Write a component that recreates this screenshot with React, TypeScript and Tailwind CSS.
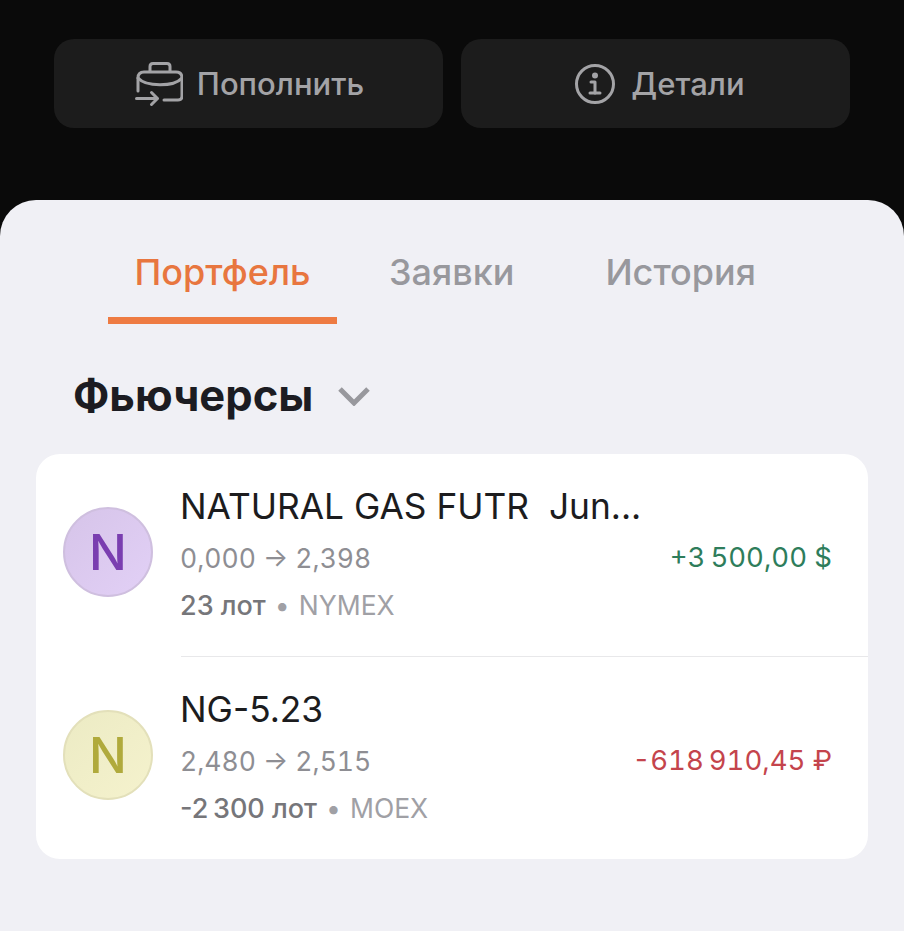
import React from "react";

function WalletIcon() {
  return (
    <svg width="48" height="48" viewBox="0 0 48 48" fill="none" stroke="#a3a3a6" strokeWidth="3" strokeLinecap="round" strokeLinejoin="round" className="shrink-0">
      <path d="M15 11V6.500C15 4.500 16 3.500 18 3.500h14c2 0 3 1 3 3V11" />
      <path d="M3 31V18c0-4 2-6 6-6h32c4 0 6 2 6 6v18c0 3-1.500 4-4 4H29" />
      <path d="M3 18c8 9 36 9 44 0" />
      <path d="M1.500 38.500H22" />
      <path d="M16.500 32.500l6 6-6 6" />
    </svg>
  );
}

function InfoIcon() {
  return (
    <svg width="42" height="42" viewBox="0 0 42 42" fill="none" stroke="#a3a3a6" strokeWidth="3" strokeLinecap="round" strokeLinejoin="round" className="shrink-0">
      <circle cx="21" cy="21" r="18.500" />
      <circle cx="21" cy="12.500" r="1.500" fill="#a3a3a6" />
      <path d="M17 19h4v11" />
      <path d="M16 30h10" />
    </svg>
  );
}

function ActionButton({ icon, label, gap, offset }: { icon: React.ReactNode; label: string; gap: string; offset: string }) {
  return (
    <button className={`flex h-[89px] w-[389px] items-center justify-center rounded-[20px] bg-[#1c1c1c] ${gap} ${offset} text-[31px] font-medium text-[#a3a3a6]`}>
      {icon}
      <span className="pt-[2px]">{label}</span>
    </button>
  );
}

function Position({
  letter, avatar, ink, name, prices, lots, exchange, pnl, pnlColor,
}: {
  letter: string; avatar: string; ink: string; name: string; prices: string; lots: string; exchange: string; pnl: string; pnlColor: string;
}) {
  return (
    <div className="flex h-[202px] items-center pl-[27px] pr-[36px]">
      <div className={`-mt-[6px] flex h-[90px] w-[90px] shrink-0 items-center justify-center rounded-full border-2 bg-linear-to-br text-[50px] font-medium leading-none ${avatar} ${ink}`}>
        {letter}
      </div>
      <div className="ml-[27px] mt-[1px] flex-1">
        <div className="text-[35.300px] leading-[44px] text-[#1c1c1e] whitespace-pre">{name}</div>
        <div className="mt-[9px] text-[26.500px] leading-[40px] tabular-nums text-[#8e8e93]">{prices}</div>
        <div className="mt-[7px] text-[26.500px] leading-[40px] text-[#a0a0a5]">
          <span className="text-[27px] font-medium text-[#76767a]">{lots}</span>
          <span className="mx-[9px]">•</span>
          {exchange}
        </div>
      </div>
      <div className={`mt-[6px] text-[27.500px] tabular-nums ${pnlColor}`}>{pnl}</div>
    </div>
  );
}

export default function App() {
  return (
    <div className="flex h-[931px] w-[904px] flex-col overflow-hidden bg-[#0a0a0a] font-['Inter',sans-serif]">
      <div className="flex h-[200px] shrink-0 justify-center gap-[18px] pt-[39px]">
        <ActionButton icon={<WalletIcon />} label="Пополнить" gap="gap-[14px]" offset="pl-[2px]" />
        <ActionButton icon={<InfoIcon />} label="Детали" gap="gap-[15px]" offset="pl-[8px]" />
      </div>
      <div className="flex-1 rounded-t-[36px] bg-[#f0f0f5] px-[36px]">
        <div className="flex h-[124px] text-[36px] font-medium leading-[44px] text-[#98989d]">
          <div className="ml-[72px] flex h-full w-[229px] justify-center border-b-[7px] border-[#ee7b42] pt-[50px] text-[#e8763f]">Портфель</div>
          <div className="ml-[52px] pt-[50px]">Заявки</div>
          <div className="ml-[91px] pt-[50px]">История</div>
        </div>
        <div className="ml-[37px] mt-[44px] flex h-[56px] items-center gap-[25px]">
          <span className="text-[43.500px] font-bold text-[#1c1c22]">Фьючерсы</span>
          <svg width="32" height="20" viewBox="0 0 32 20" fill="none" stroke="#98989d" strokeWidth="5">
            <path d="M2 3l14 14L30 3" />
          </svg>
        </div>
        <div className="mt-[30px] overflow-hidden rounded-[24px] bg-white">
          <Position letter="N" avatar="from-[#d6c4e9] to-[#e2d0f6] border-[#cfbfdf]" ink="text-[#7a3eb0]" name="NATURAL GAS FUTR  Jun..." prices="0,000 → 2,398" lots="23 лот" exchange="NYMEX" pnl="+3&#8239;500,00 $" pnlColor="text-[#2e7d5b]" />
          <div className="ml-[145px] h-px bg-[#e8e8ea]" />
          <Position letter="N" avatar="from-[#ecebc4] to-[#f5f2cd] border-[#e3e0ba]" ink="text-[#b0aa3c]" name="NG-5.23" prices="2,480 → 2,515" lots="-2&#8239;300 лот" exchange="MOEX" pnl="-618&#8239;910,45 ₽" pnlColor="text-[#c4444c]" />
        </div>
      </div>
    </div>
  );
}
